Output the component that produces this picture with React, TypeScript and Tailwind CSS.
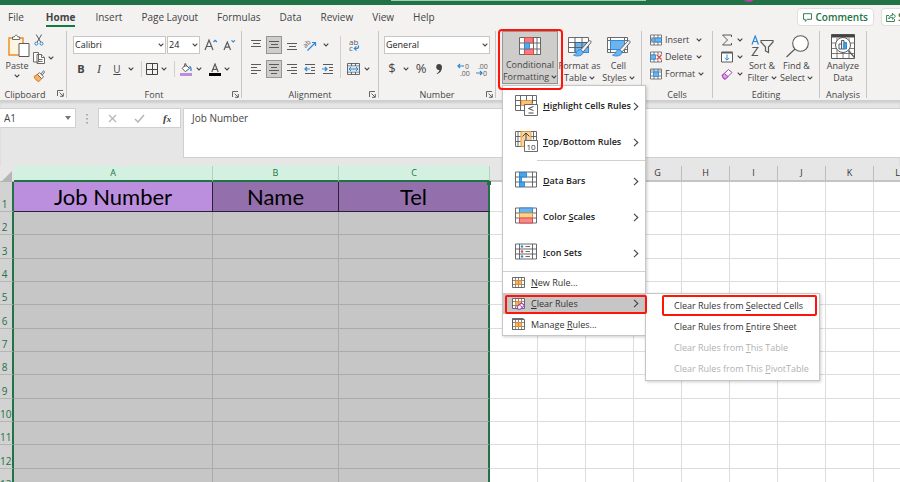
import type { ReactNode } from "react";

const INK = "#5a5a5a";
const BLUE = "#2b88d8";

function Chevron({ className = "" }: { className?: string }) {
  return (
    <svg viewBox="0 0 6 4" className={`h-1 w-1.5 shrink-0 ${className}`} fill="none" stroke="#444" strokeWidth="1.1">
      <path d="M0.7 0.7 3 3l2.3-2.3" />
    </svg>
  );
}

function Arrow() {
  return (
    <svg viewBox="0 0 6 9" className="h-[9px] w-1.5 shrink-0" fill="none" stroke="#444" strokeWidth="1.1">
      <path d="M1 .8 4.8 4.5 1 8.2" />
    </svg>
  );
}

function Tool({ label, className = "", children }: { label: string; className?: string; children: ReactNode }) {
  return (
    <button type="button" aria-label={label} className={`flex h-[18px] shrink-0 items-center justify-center ${className}`}>
      {children}
    </button>
  );
}

function More({ label }: { label: string }) {
  return (
    <Tool label={label} className="w-3">
      <Chevron />
    </Tool>
  );
}

function Group({ name, className, launcher = false, children }: { name: string; className: string; launcher?: boolean; children: ReactNode }) {
  return (
    <section aria-label={name || "Styles"} className={`flex h-[67px] shrink-0 flex-col border-r border-[#c8c6c4] ${className}`}>
      <div className="flex-1">{children}</div>
      <div className="relative flex h-2 items-center justify-center leading-none">
        <span>{name}</span>
        {launcher && (
          <button type="button" aria-label={`${name} settings`} className="absolute right-0.5 top-px">
            <svg viewBox="0 0 7 7" className="h-[7px] w-[7px]" fill="none" stroke="#555" strokeWidth="0.9">
              <path d="M.5 6V.5H6M2.5 2.5l3.6 3.6M6.3 3v3.3H3" />
            </svg>
          </button>
        )}
      </div>
    </section>
  );
}

function Lines({ rows }: { rows: number[][] }) {
  return (
    <svg viewBox="0 0 12 12" className="h-3 w-3" stroke={INK} strokeWidth="1">
      {rows.map(([x, y, w]) => (
        <path key={y} d={`M${x} ${y}h${w}`} />
      ))}
    </svg>
  );
}

function Grid({ children, className = "h-4 w-[22px]" }: { children?: ReactNode; className?: string }) {
  return (
    <svg viewBox="0 0 22 16" className={className} fill="none" stroke={INK} strokeWidth="0.9">
      <path fill="#fff" d="M.5.5h21v15H.5z" />
      <path d="M.5 5.5h21M.5 10.5h21M4.5.5v15M17.5.5v15" />
      {children}
    </svg>
  );
}

function Brush() {
  return (
    <g>
      <path d="M21.700 5 13.800 13.800l2.400 2.200L23.800 6.800c1-1.500-.8-3-2.100-1.800z" fill="#f3f2f1" stroke={INK} />
      <path d="M13.600 13.700c-2-.4-3.200.9-3.800 2.500-.5 1.600-1.600 2.500-3.300 2.800 3.400 2.200 9.800.6 9.600-3z" fill="#6cb4ee" stroke={BLUE} />
    </g>
  );
}

const tabs = ["Insert", "Page Layout", "Formulas", "Data", "Review", "View", "Help"];

function TitleBar() {
  return (
    <div className="relative flex h-[5px] shrink-0 justify-center overflow-hidden bg-[#217346]">
      <div className="mr-[-136px] h-px w-[255px] bg-[#9fcfb4]" />
      <div className="absolute right-[144px] top-[-12px] h-[14px] w-[14px] rounded-full bg-[#c239b3]" />
    </div>
  );
}

function TabBar() {
  return (
    <nav className="flex h-[26px] shrink-0 items-center overflow-hidden whitespace-nowrap pb-0.5 text-[10px] text-[#444]">
      <button type="button" className="pl-2 pr-[11px]">File</button>
      <button type="button" className="relative mr-[9px] px-[11px] font-bold">
        Home
        <span className="absolute inset-x-[11px] bottom-[-2px] h-0.5 bg-[#107c41]" />
      </button>
      {tabs.map((t) => (
        <button key={t} type="button" className="mr-[19px]">{t}</button>
      ))}
      <div className="flex-1" />
      <button type="button" className="flex h-[18px] shrink-0 items-center gap-1 rounded-sm border border-[#e1dfdd] bg-white px-[5px] font-semibold text-[#217346]">
        <svg viewBox="0 0 9 9" className="h-[9px] w-[9px]" fill="none" stroke="#217346" strokeWidth="0.9">
          <path d="M.5.7h8v5.600H4.300L2.200 8.400V6.300H.5z" />
        </svg>
        Comments
      </button>
      <button type="button" className="ml-[7px] flex h-[18px] w-[19px] shrink-0 items-center gap-0.5 overflow-hidden rounded-l-sm border border-r-0 border-[#e1dfdd] bg-white pl-1 font-semibold text-[#217346]">
        <svg viewBox="0 0 10 10" className="h-[10px] w-[10px] shrink-0" fill="none" stroke="#217346" strokeWidth="0.9">
          <path d="M3 3.500H.6v6h7.800V7M2.800 7c.2-2.600 1.700-3.600 3.600-3.600V1.200L9.500 4.300 6.400 7.200V5.300C4.800 5.300 3.700 5.800 2.800 7z" />
        </svg>
        S
      </button>
    </nav>
  );
}

function Clipboard() {
  return (
    <Group name="Clipboard" className="w-[67px] pr-4">
      <div className="flex pl-1">
        <button type="button" className="flex w-[27px] flex-col items-center pt-[3px]">
          <svg viewBox="0 0 22 24" className="ml-1 h-6 w-[22px] shrink-0" fill="none">
            <path d="M1 4h14v17H1z" fill="#fff4df" stroke="#e8912d" strokeWidth="1.500" />
            <path d="M4.500 5.500V3h2c.2-2.400 3-2.400 3.200 0h2v2.500z" fill="#fff" stroke={INK} strokeWidth=".9" />
            <path d="M11 9.500h10v13H11z" fill="#fff" stroke={INK} />
          </svg>
          <span className="py-px">Paste</span>
          <Chevron />
        </button>
        <div className="flex flex-col pl-[3px]">
          <Tool label="Cut" className="w-3">
            <svg viewBox="0 0 10 12" className="h-3 w-[10px]" fill="none" strokeWidth="1">
              <path d="M2.200.5 6.600 8M7.600.5 3.200 8" stroke={INK} />
              <circle cx="2.300" cy="9.600" r="1.500" stroke={BLUE} />
              <circle cx="7.500" cy="9.600" r="1.500" stroke={BLUE} />
            </svg>
          </Tool>
          <div className="flex">
            <Tool label="Copy" className="w-3">
              <svg viewBox="0 0 12 12" className="h-3 w-3" fill="#fff" stroke={INK} strokeWidth=".9">
                <path d="M.5.500h5v9.500h-5zM4 2.500h4.500l3 3v6H4z" />
                <path d="M8.500 2.500v3h3M6 7.500h3.500M6 9.500h3.500" />
              </svg>
            </Tool>
            <More label="Copy options" />
          </div>
          <Tool label="Format Painter" className="w-3">
            <svg viewBox="0 0 12 12" className="h-3 w-3" fill="none">
              <path d="M1 6.500 5 4l4 4-3 3.500C3.500 11 2 9 1 6.500z" fill="#f7b267" stroke="#e0761b" />
              <path d="m4.500 4.500 2-1.800 4 4-1.800 2zM8 4l2.500-3.200 1.200 1L9.200 5.200" fill="#fff" stroke={INK} strokeWidth=".9" />
            </svg>
          </Tool>
        </div>
      </div>
    </Group>
  );
}

function FontGroup() {
  return (
    <Group name="Font" className="w-[175px]" launcher>
      <div className="flex flex-col gap-1.5 pl-1.5 pt-[5px]">
        <div className="flex h-[18px] items-center">
          <label className="relative mr-px flex items-center">
            <select aria-label="Font name" className="h-[18px] w-[93px] appearance-none border border-[#c8c6c4] bg-white pl-px text-[9px] text-[#222]">
              <option>Calibri</option>
            </select>
            <Chevron className="pointer-events-none absolute right-0.5" />
          </label>
          <label className="relative flex items-center">
            <select aria-label="Font size" className="h-[18px] w-[33px] appearance-none border border-[#c8c6c4] bg-white pl-px text-[9px] text-[#222]">
              <option>24</option>
            </select>
            <Chevron className="pointer-events-none absolute right-0.5" />
          </label>
          <Tool label="Increase font size" className="ml-0.5 w-[18px]">
            <svg viewBox="0 0 14 14" className="h-[14px] w-[14px]" fill="none">
              <path d="m1 12 4-10 4 10M2.300 8.500h5.400" stroke={INK} strokeWidth="1.200" />
              <path d="m9.500 4 1.700-1.700L12.900 4" stroke={BLUE} strokeWidth="1.200" />
            </svg>
          </Tool>
          <Tool label="Decrease font size" className="w-[18px]">
            <svg viewBox="0 0 14 14" className="h-[14px] w-[14px]" fill="none">
              <path d="m2 12 3.300-8 3.300 8M3.100 9.200h4.400" stroke={INK} strokeWidth="1.200" />
              <path d="m9.500 2.300 1.700 1.700 1.700-1.700" stroke={BLUE} strokeWidth="1.200" />
            </svg>
          </Tool>
        </div>
        <div className="flex items-center">
          <Tool label="Bold" className="w-4 text-[11px] font-bold">B</Tool>
          <Tool label="Italic" className="w-5 font-['Liberation_Serif',serif] text-[12px] italic">I</Tool>
          <Tool label="Underline" className="w-4 text-[10px] underline">U</Tool>
          <More label="Underline options" />
          <span className="mx-1 h-4 w-px bg-[#d2d0ce]" />
          <Tool label="Borders" className="w-3">
            <svg viewBox="0 0 12 12" className="h-3 w-3" fill="none" stroke="#444">
              <path d="M.5.500h11v11H.5zM6.500.5v11M.5 6.500h11" />
            </svg>
          </Tool>
          <More label="Border options" />
          <span className="mx-1 h-4 w-px bg-[#d2d0ce]" />
          <Tool label="Fill colour" className="w-[14px]">
            <svg viewBox="0 0 12 13" className="h-[13px] w-3" fill="none">
              <path d="m5.500 1.500 4 4-4.200 3.200-3-3.200z" fill="#fff" stroke={INK} />
              <path d="M4.500 4V1.200c0-1 1.500-1 1.500 0V4" stroke={INK} strokeWidth=".8" />
              <path d="M9.300 3.500c2 .5 2 3 1.500 4.500" stroke={BLUE} strokeWidth="1.300" />
              <path d="M0 10h12v3H0z" fill="#b98fe0" />
            </svg>
          </Tool>
          <More label="Fill colour options" />
          <Tool label="Font colour" className="ml-1 w-3">
            <svg viewBox="0 0 12 13" className="h-[13px] w-3" fill="none">
              <path d="m2.800 9 3.200-8 3.200 8M4 6.300h4" stroke={INK} strokeWidth="1.200" />
              <path d="M0 10h12v3H0z" fill="#000" />
            </svg>
          </Tool>
          <More label="Font colour options" />
        </div>
      </div>
    </Group>
  );
}

function Alignment() {
  const on = "w-4 border border-[#979593] bg-[#cfcdcb]";
  return (
    <Group name="Alignment" className="w-[137px]" launcher>
      <div className="flex pl-1.5 pt-[5px]">
        <div className="flex flex-col gap-1.5 border-r border-[#d2d0ce] pr-1">
          <div className="flex gap-0.5">
            <Tool label="Top align" className="w-4"><Lines rows={[[1, 1.5, 10], [3, 4.5, 7], [1, 7.5, 10]]} /></Tool>
            <Tool label="Middle align" className={on}><Lines rows={[[1, 2.5, 10], [3, 5.5, 7], [1, 8.5, 10]]} /></Tool>
            <Tool label="Bottom align" className="w-4"><Lines rows={[[1, 4.5, 10], [3, 7.5, 7], [1, 10.5, 10]]} /></Tool>
            <Tool label="Orientation" className="w-4">
              <svg viewBox="0 0 14 14" className="h-[14px] w-[14px] overflow-visible" fill="none">
                <text x="0" y="8" fontSize="7" fill={INK} transform="rotate(-45 4 6)">ab</text>
                <path d="m4.500 12.500 8-8M9 4.500h3.500V8" stroke={BLUE} strokeWidth="1.200" />
              </svg>
            </Tool>
            <More label="Orientation options" />
          </div>
          <div className="flex gap-0.5">
            <Tool label="Align left" className="w-4"><Lines rows={[[1, 1.5, 10], [1, 4.5, 6], [1, 7.5, 10], [1, 10.5, 6]]} /></Tool>
            <Tool label="Center" className={on}><Lines rows={[[1, 1.5, 10], [3, 4.5, 6], [1, 7.5, 10], [3, 10.5, 6]]} /></Tool>
            <Tool label="Align right" className="w-4"><Lines rows={[[1, 1.5, 10], [5, 4.5, 6], [1, 7.5, 10], [5, 10.5, 6]]} /></Tool>
            <Tool label="Decrease indent" className="w-4">
              <svg viewBox="0 0 12 12" className="h-3 w-3" fill="none">
                <path d="M1 1.500h10M7 4.500h4M7 7.500h4M1 10.500h10" stroke={INK} />
                <path d="M6 6H1M3 4 1 6l2 2" stroke={BLUE} strokeWidth="1.200" />
              </svg>
            </Tool>
            <Tool label="Increase indent" className="w-4">
              <svg viewBox="0 0 12 12" className="h-3 w-3" fill="none">
                <path d="M1 1.500h10M7 4.500h4M7 7.500h4M1 10.500h10" stroke={INK} />
                <path d="M0 6h5M3 4l2 2-2 2" stroke={BLUE} strokeWidth="1.200" />
              </svg>
            </Tool>
          </div>
        </div>
        <div className="flex flex-col gap-1.5 pl-1">
          <Tool label="Wrap text" className="w-4">
            <svg viewBox="0 0 13 14" className="h-[14px] w-[13px] overflow-visible" fill="none">
              <text x="2" y="6.500" fontSize="8" fill={INK}>ab</text>
              <text x="2" y="13" fontSize="8" fill={INK}>c</text>
              <path d="M11.500 7.500v1c0 1.400-.8 2-2 2H7.500M9.500 8.300 7.300 10.500l2.200 2.100" stroke={BLUE} strokeWidth="1.200" />
            </svg>
          </Tool>
          <div className="flex">
            <Tool label="Merge and center" className="w-4">
              <svg viewBox="0 0 13 12" className="h-3 w-[13px]" fill="none">
                <path d="M.5.500h12v11H.5zM.5 3h12M.5 9h12M4.500.5V3M8.500.5V3M4.500 9v2.500M8.500 9v2.500" stroke={INK} strokeWidth=".9" />
                <path d="M1 3.500h11v5H1z" fill="#d6ecfb" />
                <path d="M2 6h9M4 4 2 6l2 2M9 4l2 2-2 2" stroke={BLUE} />
              </svg>
            </Tool>
            <More label="Merge options" />
          </div>
        </div>
      </div>
    </Group>
  );
}

function NumberGroup() {
  return (
    <Group name="Number" className="w-[117px]" launcher>
      <div className="flex flex-col gap-1.5 px-[5px] pt-[5px]">
        <label className="relative flex items-center">
          <select aria-label="Number format" className="h-[18px] w-full appearance-none border border-[#c8c6c4] bg-white pl-px text-[9px] text-[#222]">
            <option>General</option>
          </select>
          <Chevron className="pointer-events-none absolute right-0.5" />
        </label>
        <div className="flex items-center">
          <Tool label="Currency" className="w-4 text-[13px]">$</Tool>
          <More label="Currency options" />
          <Tool label="Percent" className="w-[18px] text-[13px]">%</Tool>
          <Tool label="Comma style" className="w-[18px]">
            <svg viewBox="0 0 6 10" className="h-[10px] w-1.5" fill="#444">
              <path d="M3 0c2 0 3 1.300 3 3.300C6 6.500 4.300 9 1 10l-.3-.8C2.500 8.400 3.300 7.300 3.400 5.900 1.500 6.300.2 5 .2 3.100.2 1.300 1.400 0 3 0z" />
            </svg>
          </Tool>
          <span className="mx-1 h-4 w-px bg-[#d2d0ce]" />
          <Tool label="Increase decimal" className="w-4">
            <svg viewBox="0 0 14 13" className="h-[13px] w-[14px] overflow-visible" fill="none">
              <text x="8" y="5.500" fontSize="7" fill={INK}>0</text>
              <text x="3" y="13" fontSize="7" fill={INK}>.00</text>
              <path d="M7 3H1M3 1 1 3l2 2" stroke={BLUE} strokeWidth="1.200" />
            </svg>
          </Tool>
          <Tool label="Decrease decimal" className="ml-0.5 w-4">
            <svg viewBox="0 0 14 13" className="h-[13px] w-[14px] overflow-visible" fill="none">
              <text x="3" y="5.500" fontSize="7" fill={INK}>.00</text>
              <text x="8" y="13" fontSize="7" fill={INK}>0</text>
              <path d="M1 10h6M5 8l2 2-2 2" stroke={BLUE} strokeWidth="1.200" />
            </svg>
          </Tool>
        </div>
      </div>
    </Group>
  );
}

function BigButton({ lines, className = "", more = true, children }: { lines: [string, string]; className?: string; more?: boolean; children: ReactNode }) {
  return (
    <button type="button" className={`flex shrink-0 flex-col items-center whitespace-nowrap leading-3 ${className}`}>
      <span className="flex h-7 items-center justify-center">{children}</span>
      <span>{lines[0]}</span>
      <span className="flex items-center gap-0.5">
        {lines[1]}
        {more && <Chevron />}
      </span>
    </button>
  );
}

function Key({ text, at }: { text: string; at: number }) {
  return (
    <span className="flex-1 text-left">
      {text.slice(0, at)}
      <u>{text[at]}</u>
      {text.slice(at + 1)}
    </span>
  );
}

function Large({ text, at, children }: { text: string; at: number; children: ReactNode }) {
  return (
    <button type="button" role="menuitem" className="flex h-9 w-full items-center pl-3 pr-1.5 font-semibold text-[#222]">
      <span className="mr-[5px] h-[22px] w-[23px] shrink-0">{children}</span>
      <Key text={text} at={at} />
      <Arrow />
    </button>
  );
}

function SmallGrid({ children }: { children?: ReactNode }) {
  return (
    <svg viewBox="0 0 13 13" className="h-[13px] w-[13px] shrink-0" fill="none" strokeWidth=".9">
      <path d="M.5 1.500h12v10H.5z" fill="#fff" stroke={INK} />
      <path d="M4 4.500h5v4H4z" fill="#f6b26b" />
      <path d="M.5 4.500h12M.5 8.500h12M3.500 1.500v10M6.500 1.500v10M9.500 1.500v10" stroke={INK} strokeWidth=".7" />
      <path d="M3.500 4.500h6v4h-6zM6.500 4.500v4" stroke="#e8912d" />
      {children}
    </svg>
  );
}

function ClearSubmenu() {
  return (
    <div role="menu" className="absolute left-[142px] top-0 w-[175px] border border-[#c8c6c4] bg-white py-px shadow-[1px_1px_3px_rgba(0,0,0,0.2)]">
      <button type="button" role="menuitem" className="relative flex h-[21px] w-full items-center pl-7 pr-3">
        <Key text="Clear Rules from Selected Cells" at={17} />
        <span className="pointer-events-none absolute inset-y-0 left-4 right-0.5 rounded-xs border-2 border-[#ff1409]" />
      </button>
      <button type="button" role="menuitem" className="flex h-[21px] w-full items-center pl-7 pr-3">
        <Key text="Clear Rules from Entire Sheet" at={17} />
      </button>
      <button type="button" role="menuitem" disabled className="flex h-[21px] w-full items-center pl-7 pr-3 text-[#b1b1b1]">
        <Key text="Clear Rules from This Table" at={17} />
      </button>
      <button type="button" role="menuitem" disabled className="flex h-[21px] w-full items-center pl-7 pr-3 text-[#b1b1b1]">
        <Key text="Clear Rules from This PivotTable" at={22} />
      </button>
    </div>
  );
}

function RulesMenu() {
  return (
    <div role="menu" className="absolute left-0 top-[54px] z-20 w-36 whitespace-nowrap border border-[#c8c6c4] bg-white pt-0.5 text-[9px] text-[#333] shadow-[1px_1px_3px_rgba(0,0,0,0.2)]">
      <Large text="Highlight Cells Rules" at={0}>
        <svg viewBox="0 0 23 22" className="h-[22px] w-[23px]" fill="none" stroke={INK} strokeWidth=".9">
          <path d="M.5.500h21v15H.5z" fill="#fff" />
          <path d="M6 5.500h11v5H6z" fill="#f9c17c" stroke="#e8912d" />
          <path d="M.5 5.500h5M.5 10.500h5M17 5.500h4.500M5.500.5v15M11.500.5v5M17.500.5v8" />
          <path d="M9.500 9.500h13v11h-13z" fill="#fff" />
          <path d="m18.500 11.500-5 2 5 2M13.500 18h5" stroke="#333" />
        </svg>
      </Large>
      <Large text="Top/Bottom Rules" at={0}>
        <svg viewBox="0 0 23 22" className="h-[22px] w-[23px]" fill="none" stroke={INK} strokeWidth=".9">
          <path d="M.5.500h21v15H.5z" fill="#fff" />
          <path d="M6 .5h10v15H6z" fill="#fbd3a0" stroke="#e8912d" />
          <path d="M.5 5.500h5M.5 10.500h5M16 5.500h5.500M3 .5v15M18.500.5v8" />
          <path d="M11 9V2M7.500 5.500 11 2l3.500 3.500" stroke="#333" />
          <path d="M9.500 9.500h13v11h-13z" fill="#fff" />
          <text x="11.500" y="18.500" fontSize="8" fill="#333" stroke="none" fontWeight="400">10</text>
        </svg>
      </Large>
      <hr className="mb-0.5 ml-[34px] border-[#d2d0ce]" />
      <Large text="Data Bars" at={0}>
        <Grid className="mt-px h-[17px] w-[22px]">
          <path d="M4.500 1h7v4.500h-7zM4.500 5.500h2v5h-2zM4.500 10.500h5V15h-5z" fill="#4aa3e8" stroke={BLUE} />
        </Grid>
      </Large>
      <Large text="Color Scales" at={6}>
        <Grid className="mt-px h-[17px] w-[22px]">
          <path d="M4.500.5h13v5h-13z" fill="#6cb4ee" stroke={BLUE} />
          <path d="M4.500 5.500h13v5h-13z" fill="#fbd68a" stroke="#e8912d" />
          <path d="M4.500 10.500h13v5h-13z" fill="#f98a8a" stroke="#e04343" />
        </Grid>
      </Large>
      <Large text="Icon Sets" at={0}>
        <Grid className="mt-px h-[17px] w-[22px]">
          <g fill={BLUE} stroke="none">
            <circle cx="7" cy="3" r="1.200" />
            <circle cx="7" cy="8" r="1.200" fill="#e04343" />
            <circle cx="7" cy="13" r="1.200" />
          </g>
          <path d="M10.500 3h4.500M10.500 8h4.500M10.500 13h4.500" />
        </Grid>
      </Large>
      <hr className="border-[#d2d0ce]" />
      <button type="button" role="menuitem" className="flex h-[21px] w-full items-center gap-1.5 pl-[9px] pr-1.5">
        <SmallGrid />
        <Key text="New Rule..." at={0} />
      </button>
      <div className="relative">
        <button type="button" role="menuitem" className="flex h-[21px] w-full items-center gap-1.5 bg-[#c6c6c6] pl-[9px] pr-1.5">
          <SmallGrid>
            <path d="m5 9.500 4.500-3.500 3 2.300-4.300 4H6z" fill="#fff" stroke="#a33fb5" strokeWidth="1.100" />
            <path d="m7.500 8 3 2.300" stroke="#a33fb5" />
          </SmallGrid>
          <Key text="Clear Rules" at={0} />
          <Arrow />
        </button>
        <span className="pointer-events-none absolute bottom-0 left-0.5 right-[-2px] top-0.5 z-10 rounded-xs border-2 border-[#ff1409]" />
        <ClearSubmenu />
      </div>
      <button type="button" role="menuitem" className="flex h-[21px] w-full items-center gap-1.5 pl-[9px] pr-1.5">
        <SmallGrid>
          <path d="M.5 11.500V.5h11" stroke={INK} />
        </SmallGrid>
        <Key text="Manage Rules..." at={7} />
      </button>
    </div>
  );
}

function Styles() {
  return (
    <Group name="" className="w-[146px]">
      <div className="flex pl-1.5">
        <div className="relative">
          <BigButton lines={["Conditional", "Formatting"]} className="h-[53px] w-14 border border-[#979593] bg-[#cfcdcb]">
            <svg viewBox="0 0 22 18" className="h-[18px] w-[22px]" fill="none" stroke={INK} strokeWidth=".9">
              <path d="M.5.500h21v17H.5z" fill="#fff" />
              <path d="M.5 6h21M.5 12h21M5.500.5v17M14.500.5v17M18 .5v17" />
              <path d="M5.500.500H14V6H5.500zM5.500 12h9v5.500h-9z" fill="#f47c7c" stroke="#e04343" />
              <path d="M5.500 6h5v6h-5z" fill="#5aa9e6" stroke={BLUE} />
            </svg>
          </BigButton>
          <span className="pointer-events-none absolute bottom-[-6px] left-[-4px] right-[-5px] top-[-2px] z-30 rounded-sm border-2 border-[#ff1409]" />
          <RulesMenu />
        </div>
        <BigButton lines={["Format as", "Table"]} className="h-[53px] w-[43px] pt-px">
          <svg viewBox="0 0 25 21" className="h-[21px] w-[25px]" fill="none" stroke={INK} strokeWidth=".9">
            <path d="M1.500 1.500h20v15h-20z" fill="#fff" />
            <path d="M8 6.500h13.500v10H8z" fill="#6cb4ee" stroke={BLUE} />
            <path d="M1.500 6.500h20M1.500 11.500h20M8 1.500v15M15 1.500v15" />
            <Brush />
          </svg>
        </BigButton>
        <BigButton lines={["Cell", "Styles"]} className="h-[53px] w-[35px] pt-px">
          <svg viewBox="0 0 25 21" className="h-[21px] w-[25px]" fill="none" stroke={INK} strokeWidth=".9">
            <path d="M1.500 1.500h20v15h-20z" fill="#fff" />
            <path d="M1.500 4.500h20M1.500 13.500h20M4.500 1.500v15M18.500 1.500v15" />
            <path d="M4.500 4.500h14v9h-14z" fill="#6cb4ee" stroke={BLUE} />
            <Brush />
          </svg>
        </BigButton>
      </div>
    </Group>
  );
}

function CellIcon({ kind }: { kind: string }) {
  return (
    <svg viewBox="0 0 12 12" className="h-3 w-3 shrink-0" fill="none" stroke={INK} strokeWidth=".8">
      <path d="M.5 1h11v10H.5z" fill="#fff" />
      <path d="M.5 4h11M.5 8h11M4 1v10M8 1v10" />
      {kind === "Insert" && <path d="M5 4h6.500v4H5zM5 6H1M2.800 4 1 6l1.800 2" fill="#6cb4ee" stroke={BLUE} />}
      {kind === "Delete" && (
        <>
          <path d="M.5 4h5v4h-5z" fill="#6cb4ee" stroke={BLUE} />
          <path d="M6.500 3.500H12V9H6.500z" fill="#f3f2f1" stroke="none" />
          <path d="m7 4 4.500 4.500M11.500 4 7 8.500" stroke="#e04343" strokeWidth="1.200" />
        </>
      )}
      {kind === "Format" && <path d="M3.500 4h5v4.500h-5zM1 2h10" fill="#6cb4ee" stroke={BLUE} />}
    </svg>
  );
}

function Ribbon() {
  return (
    <div className="flex h-[69px] shrink-0 whitespace-nowrap text-[9px] text-[#444]">
      <div className="relative">
        <Clipboard />
        <button type="button" aria-label="Clipboard settings" className="absolute bottom-[3px] right-[3px]">
          <svg viewBox="0 0 7 7" className="h-[7px] w-[7px]" fill="none" stroke="#555" strokeWidth="0.9">
            <path d="M.5 6V.5H6M2.500 2.500l3.600 3.600M6.300 3v3.300H3" />
          </svg>
        </button>
      </div>
      <FontGroup />
      <Alignment />
      <NumberGroup />
      <Styles />
      <Group name="Cells" className="w-[71px]">
        <div className="pl-2">
          {["Insert", "Delete", "Format"].map((t) => (
            <button key={t} type="button" className="flex h-[17px] w-[52px] items-center gap-[3px]">
              <CellIcon kind={t} />
              <span className="flex-1 text-left">{t}</span>
              <Chevron />
            </button>
          ))}
        </div>
      </Group>
      <Group name="Editing" className="w-[107px]">
        <div className="flex">
          <div className="flex flex-col pl-2">
            <button type="button" aria-label="AutoSum" className="flex h-[17px] items-center gap-1">
              <svg viewBox="0 0 12 12" className="h-3 w-3" fill="none" stroke={INK}>
                <path d="M10.500 3V1h-9l5 5-5 5h9V9" />
              </svg>
              <Chevron />
            </button>
            <button type="button" aria-label="Fill" className="flex h-[17px] items-center gap-1">
              <svg viewBox="0 0 12 12" className="h-3 w-3" fill="none" stroke={INK}>
                <path d="M.5 1.500h11v9.500H.5z" fill="#fff" />
                <path d="M.5 1.500h11" strokeWidth="2" />
                <path d="M6 3.500V9M3.800 7 6 9.200 8.200 7" stroke={BLUE} />
              </svg>
              <Chevron />
            </button>
            <button type="button" aria-label="Clear" className="flex h-[17px] items-center gap-1">
              <svg viewBox="0 0 12 12" className="h-3 w-3" fill="#fff" stroke="#a33fb5">
                <path d="m1 7.500 6.500-6 3.500 3-6.500 6.500H3z" />
                <path d="m3.500 5.500 3.500 3-2.500 2.500H3L1 7.500z" fill="#d9a0e0" />
              </svg>
              <Chevron />
            </button>
          </div>
          <BigButton lines={["Sort &", "Filter"]} className="w-[38px] pt-px">
            <svg viewBox="0 0 24 22" className="h-[22px] w-6" fill="none" strokeWidth="1.200">
              <path d="m2 9.500 3.200-8.500 3.200 8.500M3 6.500h4.400" stroke={BLUE} />
              <path d="M2.300 12.500h5.500L2.300 20.500h5.800" stroke={INK} />
              <path d="M11 5.500h12v1.500l-4.500 5v5.500l-3 -1.500V12L11 7z" stroke={INK} />
            </svg>
          </BigButton>
          <BigButton lines={["Find &", "Select"]} className="w-[31px] pt-px">
            <svg viewBox="0 0 24 24" className="h-6 w-6" fill="none" stroke={INK} strokeWidth="1.100">
              <circle cx="15.500" cy="9.500" r="7.800" fill="#fff" />
              <path d="m10 15-8.500 8" />
            </svg>
          </BigButton>
        </div>
      </Group>
      <Group name="Analysis" className="w-[47px]">
        <BigButton lines={["Analyze", "Data"]} more={false} className="w-full pt-px">
          <svg viewBox="0 0 24 25" className="h-[25px] w-6" fill="none" stroke={INK} strokeWidth="1">
            <path d="M.5.500h23v24H.5z" fill="#fff" />
            <path d="M.5 2h23" strokeWidth="3" stroke="#444" />
            <path d="M.5 9h23M.5 14.500h23M.5 19.500h23M6 4v20.500M12 4v20.500M18 4v20.500" strokeWidth=".8" />
            <circle cx="12" cy="11" r="7.500" fill="#fff" />
            <path d="M8 10h2.500v5H8z" />
            <path d="M10.500 6.500H13V15h-2.500z" fill="#d6ecfb" stroke={INK} />
            <path d="M13 8.500h2.500V15H13z" fill="#4aa3e8" stroke={BLUE} />
            <path d="m17.500 16.500 6 7" strokeWidth="1.300" />
          </svg>
        </BigButton>
      </Group>
    </div>
  );
}

function FormulaBar() {
  return (
    <div className="flex shrink-0 items-start bg-[#e6e6e6] pb-2 pt-2 text-[10px] text-[#444] shadow-[inset_0_3px_2px_#cfcfcf]">
      <label className="relative flex items-center">
        <input aria-label="Name box" defaultValue="A1" className="h-5 w-[76px] border border-l-0 border-[#d0d0d0] bg-white pl-1" />
        <svg viewBox="0 0 6 4" className="pointer-events-none absolute right-[5px] h-1 w-1.5" fill="#777"><path d="M0 0h6L3 4z" /></svg>
      </label>
      <svg viewBox="0 0 2 10" className="mx-[10px] mt-1.5 h-[10px] w-0.5" fill="#aaa">
        <path d="M0 0h2v1.500H0zM0 4h2v1.500H0zM0 8h2v1.500H0z" />
      </svg>
      <div className="mr-0.5 flex h-5 w-[83px] items-center justify-around border border-[#d0d0d0] bg-white">
        <button type="button" aria-label="Cancel">
          <svg viewBox="0 0 9 9" className="h-[9px] w-[9px]" stroke="#b5b5b5" strokeWidth="1.200"><path d="m1 1 7 7M8 1 1 8" /></svg>
        </button>
        <button type="button" aria-label="Enter">
          <svg viewBox="0 0 11 9" className="h-[9px] w-[11px]" fill="none" stroke="#b5b5b5" strokeWidth="1.500"><path d="m1 5 3 3 6-7" /></svg>
        </button>
        <button type="button" aria-label="Insert function" className="font-['Liberation_Serif',serif] text-[11px] font-bold italic leading-4">
          f<span className="text-[9px]">x</span>
        </button>
      </div>
      <textarea aria-label="Formula" defaultValue="Job Number" className="h-[50px] flex-1 resize-none border border-r-0 border-[#d0d0d0] bg-white px-2 py-0.5 leading-[14px]" />
    </div>
  );
}

const picked = [
  { id: "A", title: "Job Number", col: "w-[199px]", fill: "bg-[#bb8fdd]" },
  { id: "B", title: "Name", col: "w-[126px]", fill: "bg-[#9370ab]" },
  { id: "C", title: "Tel", col: "w-[151px]", fill: "bg-[#9370ab]" },
];
const others = ["D", "E", "F", "G", "H", "I", "J", "K", "L"];
const rows = Array.from({ length: 12 }, (_, i) => i + 2);

function Sheet() {
  return (
    <div className="min-h-0 flex-1 overflow-hidden bg-white">
      <table className="w-[922px] table-fixed border-separate border-spacing-0 text-[9px]">
        <colgroup>
          <col className="w-[14px]" />
          {picked.map((c) => <col key={c.id} className={c.col} />)}
          {others.map((c) => <col key={c} className="w-12" />)}
        </colgroup>
        <thead>
          <tr className="h-4 text-center">
            <th aria-label="Select all" className="border-b border-[#b5b5b5] bg-[#e6e6e6] p-0 align-bottom">
              <svg viewBox="0 0 10 10" className="ml-0.5 h-[10px] w-[10px]" fill="#b5b5b5"><path d="M10 0v10H0z" /></svg>
            </th>
            {picked.map((c) => (
              <th key={c.id} scope="col" className="border-b-2 border-r border-b-[#217346] border-r-[#b9cdc1] bg-[#d3f0e0] p-0 font-normal text-[#217346]">{c.id}</th>
            ))}
            {others.map((c) => (
              <th key={c} scope="col" className="border-b-2 border-r border-b-[#c4c4c4] border-r-[#bcbcbc] bg-[#e6e6e6] p-0 font-normal text-[#333]">{c}</th>
            ))}
          </tr>
        </thead>
        <tbody>
          <tr className="h-[30px]">
            <th scope="row" className="border-b border-r-2 border-b-[#b5b5b5] border-r-[#217346] bg-[#d2d2d2] p-0 pr-[3px] align-bottom text-[10px] font-normal leading-[13px] text-[#217346]">1</th>
            {picked.map((c) => (
              <td key={c.id} className={`border-b border-[#2c1f38] p-0 text-center font-[Lato,sans-serif] text-[22px] leading-[22px] text-black ${c.fill} ${c.id === "C" ? "relative border-r-2 border-r-[#217346]" : "border-r"}`}>
                {c.title}
                {c.id === "C" && <span className="absolute right-[-3px] top-[-1px] h-1 w-1 bg-[#217346]" />}
              </td>
            ))}
            {others.map((c) => <td key={c} className="border-b border-r border-[#dcdcdc] p-0" />)}
          </tr>
          {rows.map((n) => (
            <tr key={n} className="h-[23px] nth-[3n]:h-6">
              <th scope="row" className="border-b border-r-2 border-b-[#b5b5b5] border-r-[#217346] bg-[#d2d2d2] p-0 pr-[3px] align-bottom text-[10px] font-normal leading-[13px] text-[#217346]">{n}</th>
              {picked.map((c) => (
                <td key={c.id} className={`border-b bg-[#c6c6c6] p-0 ${c.id === "C" ? "border-r-2 border-b-[#ababab] border-r-[#217346]" : "border-r border-[#ababab]"}`} />
              ))}
              {others.map((c) => <td key={c} className="border-b border-r border-[#dcdcdc] p-0" />)}
            </tr>
          ))}
        </tbody>
      </table>
    </div>
  );
}

export default function App() {
  return (
    <main className="flex h-screen flex-col overflow-hidden bg-[#f3f2f1] font-['Open_Sans','Noto_Sans',sans-serif]">
      <TitleBar />
      <TabBar />
      <Ribbon />
      <FormulaBar />
      <Sheet />
    </main>
  );
}
